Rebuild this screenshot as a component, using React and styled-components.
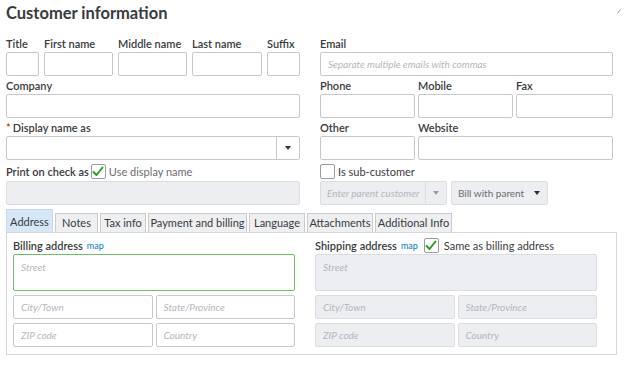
import React from 'react'
import styled, { createGlobalStyle } from 'styled-components'

const font = `Lato, "Open Sans", "Liberation Sans", sans-serif`

const GlobalStyle = createGlobalStyle`
  body {
    margin: 0;
    background: #fff;
    font-family: ${font};
    color: #393a3d;
  }
`

const Page = styled.div`
  position: relative;
  width: 624px;
  height: 365px;
  padding: 0 6px;
  box-sizing: border-box;
  overflow: hidden;
`

const Heading = styled.h1`
  margin: 0;
  height: 36px;
  padding-top: 2px;
  box-sizing: border-box;
  font-size: 16.5px;
  line-height: 22px;
  font-weight: 700;
`

const CornerMark = styled.svg`
  position: absolute;
  top: 9px;
  right: 3px;
`

const TopGrid = styled.div`
  display: grid;
  grid-template-columns: 294px 293px;
  column-gap: 20px;
`

const Column = styled.div`
  display: flex;
  flex-direction: column;
`

const Row = styled.div`
  display: grid;
  grid-template-columns: ${p => p.$cols};
  column-gap: ${p => p.$gap || 3}px;
`

const Field = styled.div`
  display: flex;
  flex-direction: column;
  min-width: 0;
  margin-bottom: 2px;
`

const Label = styled.label`
  height: 16px;
  font-size: 11px;
  line-height: 16px;
  font-weight: 600;
  white-space: nowrap;
`

const Required = styled.span`
  color: #d52b1e;
  margin-right: 2px;
`

const Input = styled.input`
  box-sizing: border-box;
  width: 100%;
  height: 24px;
  margin: 0;
  padding: 0 7px;
  border: 1px solid ${p => (p.disabled ? '#dcdde0' : '#c6c8cc')};
  border-radius: 2px;
  background: ${p => (p.disabled ? '#eceef1' : '#fff')};
  font-family: ${font};
  font-size: 10px;
  outline: none;
  &::placeholder {
    color: #b3b6bc;
    font-style: italic;
  }
`

const Street = styled.textarea`
  grid-column: 1 / 3;
  box-sizing: border-box;
  height: 37px;
  margin: 0;
  padding: 6px 7px;
  resize: none;
  border: 1px solid ${p => (p.disabled ? '#dcdde0' : '#6cc35f')};
  border-radius: 2px;
  background: ${p => (p.disabled ? '#eceef1' : '#fff')};
  font-family: ${font};
  font-size: 10px;
  outline: none;
  &::placeholder {
    color: #b3b6bc;
    font-style: italic;
  }
`

const Select = styled.div`
  box-sizing: border-box;
  display: flex;
  height: 24px;
  width: ${p => (p.$w ? p.$w + 'px' : '100%')};
  border: 1px solid ${p => (p.$muted ? '#dcdde0' : '#c6c8cc')};
  border-radius: 2px;
  background: ${p => (p.$muted ? '#eceef1' : '#fff')};
`

const SelectText = styled.span`
  flex: 1;
  min-width: 0;
  padding: 0 6px;
  font-size: 10px;
  line-height: 22px;
  white-space: nowrap;
  overflow: hidden;
  color: ${p => (p.$placeholder ? '#b3b6bc' : '#6b6c72')};
  font-style: ${p => (p.$placeholder ? 'italic' : 'normal')};
`

const Arrow = styled.span`
  width: ${p => p.$w || 21}px;
  display: flex;
  align-items: center;
  justify-content: center;
  border-left: ${p => (p.$divider ? `1px solid ${p.$muted ? '#dcdde0' : '#c6c8cc'}` : 'none')};
  &::after {
    content: '';
    border-left: 3px solid transparent;
    border-right: 3px solid transparent;
    border-top: 4px solid ${p => (p.$light ? '#9a9ca2' : '#2d2e31')};
  }
`

const CheckLine = styled.div`
  display: flex;
  align-items: center;
  height: 19px;
  gap: 2px;
`

const Box = styled.span`
  box-sizing: border-box;
  width: 15px;
  height: 15px;
  border: 1px solid #9a9ca1;
  border-radius: 2px;
  background: #fff;
  display: inline-flex;
  align-items: center;
  justify-content: center;
  margin-right: 1px;
`

const CheckText = styled.span`
  font-size: 11px;
  line-height: 15px;
  color: ${p => (p.$dim ? '#6b6c72' : '#393a3d')};
  font-weight: ${p => (p.$bold ? 600 : 400)};
  white-space: nowrap;
`

const ParentRow = styled.div`
  display: flex;
  gap: 4px;
`

const TabBar = styled.div`
  display: flex;
  align-items: flex-end;
  gap: 2px;
  margin-top: 4px;
`

const Tab = styled.div`
  box-sizing: border-box;
  width: ${p => p.$w}px;
  height: ${p => (p.$active ? 23 : 19)}px;
  border: 1px solid ${p => (p.$active ? '#c7d9ee' : '#c9cbcf')};
  border-bottom: none;
  background: ${p => (p.$active ? '#d6e8f8' : '#eeeff1')};
  font-size: 11px;
  line-height: ${p => (p.$active ? 24 : 18)}px;
  text-align: center;
  white-space: nowrap;
`

const Panel = styled.div`
  box-sizing: border-box;
  width: 611px;
  height: 123px;
  border: 1px solid #d6d8dc;
  padding: 3px 6px 0;
  display: grid;
  grid-template-columns: 282px 282px;
  column-gap: 20px;
`

const AddressHead = styled.div`
  display: flex;
  align-items: center;
  gap: 4px;
  height: 18px;
`

const MapLink = styled.a`
  font-size: 9px;
  color: #0077c5;
  text-decoration: none;
  margin-right: 2px;
`

const AddressGrid = styled.div`
  display: grid;
  grid-template-columns: 1fr 1fr;
  column-gap: 3px;
  row-gap: 4px;
`

const Check = () => (
  <svg width="12" height="11" viewBox="0 0 12 11">
    <path d="M1.5 6 L4.5 9 L10.5 1.5" fill="none" stroke="#2ca01c" strokeWidth="2" strokeLinecap="round" strokeLinejoin="round" />
  </svg>
)

const tabs = [
  ['Address', 47],
  ['Notes', 43],
  ['Tax info', 46],
  ['Payment and billing', 99],
  ['Language', 56],
  ['Attachments', 66],
  ['Additional Info', 77],
]

const Address = ({ disabled }) => (
  <>
    <Street disabled={disabled} placeholder="Street" />
    <Input disabled={disabled} placeholder="City/Town" />
    <Input disabled={disabled} placeholder="State/Province" />
    <Input disabled={disabled} placeholder="ZIP code" />
    <Input disabled={disabled} placeholder="Country" />
  </>
)

export default function App() {
  return (
    <Page>
      <GlobalStyle />
      <Heading>Customer information</Heading>
      <CornerMark width="4" height="5" viewBox="0 0 4 5">
        <path d="M0.5 4.5 L3.5 0.5" stroke="#9a9ca1" strokeWidth="1" />
      </CornerMark>

      <TopGrid>
        <Column>
          <Row $cols="33px 69px 69px 70px 33px" $gap={5}>
            <Field><Label>Title</Label><Input /></Field>
            <Field><Label>First name</Label><Input /></Field>
            <Field><Label>Middle name</Label><Input /></Field>
            <Field><Label>Last name</Label><Input /></Field>
            <Field><Label>Suffix</Label><Input /></Field>
          </Row>
          <Field><Label>Company</Label><Input /></Field>
          <Field>
            <Label><Required>*</Required>Display name as</Label>
            <Select>
              <SelectText />
              <Arrow $divider $w={22} />
            </Select>
          </Field>
          <CheckLine>
            <CheckText $bold>Print on check as</CheckText>
            <Box><Check /></Box>
            <CheckText $dim>Use display name</CheckText>
          </CheckLine>
          <Input disabled />
        </Column>

        <Column>
          <Field>
            <Label>Email</Label>
            <Input placeholder="Separate multiple emails with commas" />
          </Field>
          <Row $cols="95px 95px 1fr">
            <Field><Label>Phone</Label><Input /></Field>
            <Field><Label>Mobile</Label><Input /></Field>
            <Field><Label>Fax</Label><Input /></Field>
          </Row>
          <Row $cols="95px 1fr">
            <Field><Label>Other</Label><Input /></Field>
            <Field><Label>Website</Label><Input /></Field>
          </Row>
          <CheckLine>
            <Box />
            <CheckText>Is sub-customer</CheckText>
          </CheckLine>
          <ParentRow>
            <Select $w={127} $muted>
              <SelectText $placeholder>Enter parent customer</SelectText>
              <Arrow $divider $muted $light $w={20} />
            </Select>
            <Select $w={97} $muted>
              <SelectText>Bill with parent</SelectText>
              <Arrow $w={20} />
            </Select>
          </ParentRow>
        </Column>
      </TopGrid>

      <TabBar>
        {tabs.map(([t, w], i) => (
          <Tab key={t} $w={w} $active={i === 0}>{t}</Tab>
        ))}
      </TabBar>
      <Panel>
        <div>
          <AddressHead>
            <CheckText $bold>Billing address</CheckText>
            <MapLink>map</MapLink>
          </AddressHead>
          <AddressGrid>
            <Address />
          </AddressGrid>
        </div>
        <div>
          <AddressHead>
            <CheckText $bold>Shipping address</CheckText>
            <MapLink>map</MapLink>
            <Box><Check /></Box>
            <CheckText>Same as billing address</CheckText>
          </AddressHead>
          <AddressGrid>
            <Address disabled />
          </AddressGrid>
        </div>
      </Panel>
    </Page>
  )
}
